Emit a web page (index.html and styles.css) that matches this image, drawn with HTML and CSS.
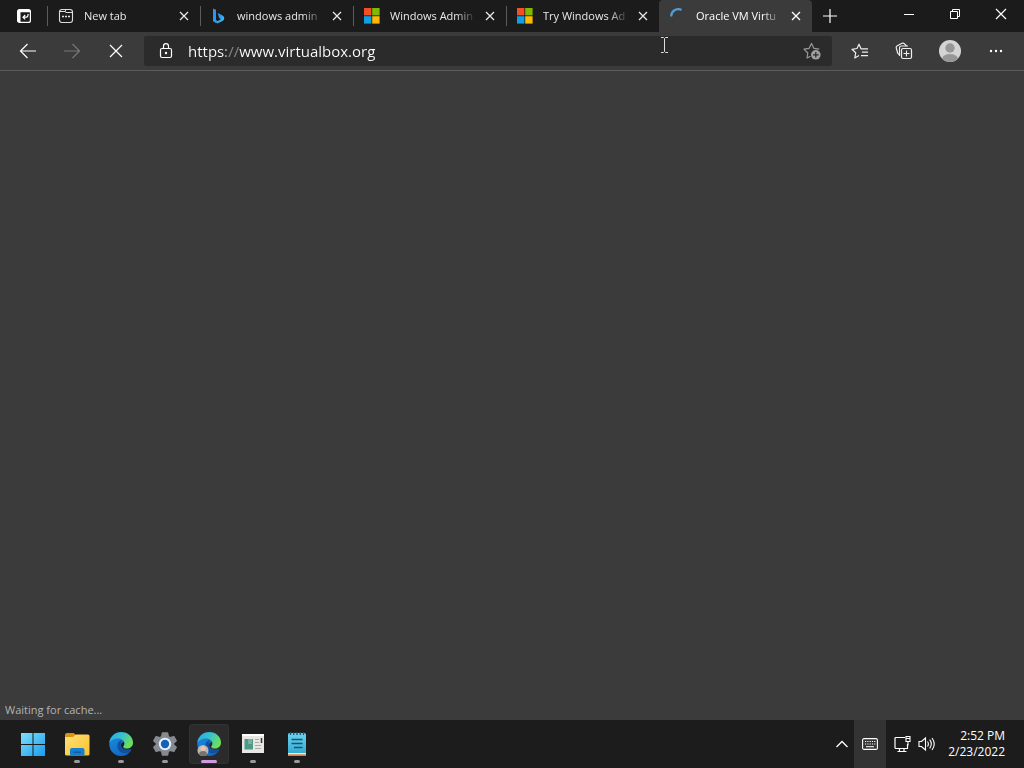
FILE: index.html
```html
<!DOCTYPE html>
<html lang="en">
<head>
<meta charset="utf-8">
<meta name="viewport" content="width=device-width, initial-scale=1">
<title>Oracle VM VirtualBox</title>
<link rel="stylesheet" href="styles.css">
</head>
<body>
<svg class="defs" aria-hidden="true">
  <defs>
    <linearGradient id="edge-top" x1="0" y1="0" x2="1" y2="0.5"><stop offset="0" stop-color="#2aa6ea"/><stop offset=".5" stop-color="#35c1d0"/><stop offset="1" stop-color="#6be05a"/></linearGradient>
    <linearGradient id="edge-body" x1="0" y1="0" x2="0.6" y2="1"><stop offset="0" stop-color="#1b8fdf"/><stop offset="1" stop-color="#1168c4"/></linearGradient>
    <linearGradient id="win" x1="0" y1="0" x2="1" y2="1"><stop offset="0" stop-color="#7fe0fb"/><stop offset="1" stop-color="#189cee"/></linearGradient>
    <linearGradient id="bing-g" x1="0" y1="0" x2="1" y2="1"><stop offset="0" stop-color="#2f8df0"/><stop offset=".6" stop-color="#2b9df0"/><stop offset="1" stop-color="#4fc9f0"/></linearGradient>
    <linearGradient id="folder-g" x1="0" y1="0" x2="1" y2="1"><stop offset="0" stop-color="#ffe07a"/><stop offset="1" stop-color="#f9c22b"/></linearGradient>
    <linearGradient id="note-g" x1="0" y1="0" x2="0" y2="1"><stop offset="0" stop-color="#6bd3ee"/><stop offset="1" stop-color="#2fa4cf"/></linearGradient>
  </defs>
  <symbol id="close" viewBox="0 0 10 10"><path d="M1 1l8 8M9 1l-8 8" fill="none" stroke="currentColor" stroke-width="1.3"/></symbol>
  <symbol id="ms" viewBox="0 0 16 16"><path fill="#f25022" d="M0 0h7.400v7.400H0z"/><path fill="#7fba00" d="M8.200 0h7.400v7.400H8.200z"/><path fill="#109fe2" d="M0 8.200h7.400v7.400H0z"/><path fill="#ffb900" d="M8.200 8.200h7.400v7.400H8.200z"/></symbol>
  <symbol id="edge" viewBox="0 0 24 24">
    <path fill="url(#edge-body)" d="M.3 11C.8 5 5.500 1 12 1l3 9c-2 .2-3 1.500-3 3 0 4 4 5.500 9 4.500.8-.2 1.300.5.8 1.200A12 12 0 0 1 12 24C5 24 0 18.500.3 11z"/>
    <path fill="#114fa0" d="M8.500 14c0-4 2.500-6 5-5.500-1.500 1-2 2.500-1.700 4.500.6 4 5 5.500 9.700 4.400.8-.2 1.200.5.700 1.100C19 23 8.500 22.500 8.500 14z"/>
    <path fill="url(#edge-top)" d="M.3 11C1 4.500 6 0 12 0c7 0 12 5 12 10.500 0 4-3 6-6.200 6-2.600 0-3.600-1-3.600-1.800 0-.8 1.200-1.300 1.200-3.200C15.400 8.500 12.500 6.500 9 6.500 5 6.500 1.500 8.500.3 11z"/>
  </symbol>
</svg>

<header class="browser">
  <div class="tabstrip">
    <button class="tab-actions" aria-label="Tab actions menu">
      <svg width="16" height="16" viewBox="0 0 16 16"><rect x="1.600" y="1.600" width="12.800" height="12.800" rx="2" fill="none" stroke="#fff" stroke-width="1.200"/><path d="M1.500 3.500a2 2 0 0 1 2-2h9a2 2 0 0 1 2 2v.8H4.500v10.200h-1a2 2 0 0 1-2-2z" fill="#fff"/><path d="M12 6v1a2 2 0 0 1-2 2.200H7.200M9.200 7L7 9.200l2.200 2.200" fill="none" stroke="#fff" stroke-width="1.200"/></svg>
    </button>
    <nav class="tabs" aria-label="Tabs">
      <div class="tab">
        <svg class="favicon" viewBox="0 0 16 16"><rect x="1.500" y="1.500" width="13" height="13" rx="2.500" fill="none" stroke="#ddd" stroke-width="1.100"/><path d="M1.500 3.500h6V2M7.500 4.500h7" fill="none" stroke="#ddd"/><path d="M4 8.500h2M7 8.500h2M10 8.500h2" stroke="#ddd" stroke-width="1.500"/></svg>
        <a class="title" href="#">New tab</a>
        <button class="tab-close" aria-label="Close New tab"><svg width="10" height="10"><use href="#close"/></svg></button>
      </div>
      <div class="tab">
        <svg class="favicon" viewBox="0 0 16 16"><path fill="url(#bing-g)" d="M2 .5l3 1.200v10.300l2.500 1.500L5 15 2 13.200zM6.700 5l4.500 2.200c1.500.8 2 1.800 2 3 0 1-.5 2-1.400 2.600L6.500 15.500 5 14.300l5-3.200-1.800-1z"/></svg>
        <a class="title" href="#">windows admin</a>
        <button class="tab-close" aria-label="Close windows admin"><svg width="10" height="10"><use href="#close"/></svg></button>
      </div>
      <div class="tab">
        <svg class="favicon"><use href="#ms"/></svg>
        <a class="title" href="#">Windows Admin</a>
        <button class="tab-close" aria-label="Close Windows Admin"><svg width="10" height="10"><use href="#close"/></svg></button>
      </div>
      <div class="tab">
        <svg class="favicon"><use href="#ms"/></svg>
        <a class="title" href="#">Try Windows Ad</a>
        <button class="tab-close" aria-label="Close Try Windows Ad"><svg width="10" height="10"><use href="#close"/></svg></button>
      </div>
      <div class="tab active">
        <svg class="favicon" viewBox="0 0 16 16"><path d="M1.200 8.500A7 7 0 0 1 11.500 2" fill="none" stroke="#4f9dd6" stroke-width="2.200"/></svg>
        <a class="title" href="#" aria-current="page">Oracle VM Virtu</a>
        <button class="tab-close" aria-label="Close Oracle VM VirtualBox"><svg width="10" height="10"><use href="#close"/></svg></button>
      </div>
      <button class="new-tab" aria-label="New tab"><svg width="14" height="14" viewBox="0 0 14 14"><path d="M7 0v14M0 7h14" stroke="#fff" stroke-width="1.200"/></svg></button>
    </nav>
    <div class="window-controls">
      <button aria-label="Minimize"><svg width="10" height="10"><path d="M0 5.500h10" stroke="#fff"/></svg></button>
      <button aria-label="Restore"><svg width="10" height="10"><path d="M.5 2.500h7v7h-7zM2.500 2.500v-2h7v7h-2" fill="none" stroke="#fff"/></svg></button>
      <button aria-label="Close window"><svg width="12" height="12" viewBox="0 0 12 12"><path d="M1 1l10 10M11 1L1 11" stroke="#fff" stroke-width="1.200"/></svg></button>
    </div>
  </div>

  <div class="toolbar">
    <button class="tool" aria-label="Back"><svg width="18" height="16" viewBox="0 0 18 16"><path d="M17 8H1.500M8.500 1l-7 7 7 7" fill="none" stroke="#fff" stroke-width="1.200"/></svg></button>
    <button class="tool" aria-label="Forward" disabled><svg width="18" height="16" viewBox="0 0 18 16"><path d="M1 8h15.500M9.500 1l7 7-7 7" fill="none" stroke="#787878" stroke-width="1.200"/></svg></button>
    <button class="tool" aria-label="Stop loading"><svg width="14" height="14" viewBox="0 0 14 14"><path d="M1 1l12 12M13 1L1 13" stroke="#fff" stroke-width="1.200"/></svg></button>
    <div class="address">
      <button class="field-button" aria-label="View site information"><svg width="14" height="16" viewBox="0 0 14 16"><rect x="1.500" y="5.500" width="11" height="9" rx="1.500" fill="none" stroke="#fff" stroke-width="1.200"/><path d="M4.500 5.500V3.200a2.500 2.500 0 0 1 5 0v2.300" fill="none" stroke="#fff" stroke-width="1.200"/><circle cx="7" cy="10" r="1.200" fill="#fff"/></svg></button>
      <input class="url" type="text" aria-label="Address and search bar" value="https://www.virtualbox.org" spellcheck="false">
      <button class="field-button" aria-label="Add this page to favorites"><svg width="18" height="18" viewBox="0 0 18 18"><path d="M7.500 14.200L4 16l.8-5L1 7.200l5-.8L8.500 1.500 11 6.400l5.200.8" fill="none" stroke="#9a9a9a" stroke-width="1.200" stroke-linejoin="round"/><circle cx="12.800" cy="12.800" r="4.800" fill="#a0a0a0"/><path d="M12.800 10v5.600M10 12.800h5.600" stroke="#2b2b2b" stroke-width="1.200"/></svg></button>
      <svg class="pointer" width="7" height="16" viewBox="0 0 7 16" aria-hidden="true"><path d="M0 .5h2.500l1 1 1-1H7M0 15.500h2.500l1-1 1 1H7M3.500 1.500v13" fill="none" stroke="#ddd"/></svg>
    </div>
    <div class="tool-group">
      <button class="tool" aria-label="Favorites"><svg width="18" height="18" viewBox="0 0 18 18"><path d="M11.500 6.800H10L8 2.200 6 6.500l-5 .8 3.700 3.500L3.800 16 8 13.500M10 6.800h7M11 10.200h6M10 13.600h7" fill="none" stroke="#eee" stroke-width="1.200" stroke-linejoin="round"/></svg></button>
      <button class="tool" aria-label="Collections"><svg width="18" height="18" viewBox="0 0 18 18"><path d="M5 13L3.500 12a2.500 2.500 0 0 1-1-1.500L1.300 6a2 2 0 0 1 1-2.300L7 1.300a2 2 0 0 1 2.300.3L11.500 4" fill="none" stroke="#eee" stroke-width="1.200"/><rect x="6.500" y="6.500" width="10" height="10" rx="1.500" fill="none" stroke="#eee" stroke-width="1.200"/><path d="M11.500 8.500v6M8.500 11.500h6M4.500 14V6a2 2 0 0 1 2-2H13" fill="none" stroke="#eee" stroke-width="1.100"/></svg></button>
      <button class="tool profile" aria-label="Profile"><svg width="22" height="22" viewBox="0 0 22 22"><clipPath id="disc"><circle cx="11" cy="11" r="11"/></clipPath><g clip-path="url(#disc)"><path fill="#d4d4d4" d="M0 0h22v22H0z"/><circle cx="11" cy="8" r="4.700" fill="#979797"/><ellipse cx="11" cy="19" rx="8" ry="5" fill="#979797"/></g></svg></button>
      <button class="tool" aria-label="Settings and more"><svg width="14" height="4"><circle cx="2" cy="2" r="1.200" fill="#fff"/><circle cx="7" cy="2" r="1.200" fill="#fff"/><circle cx="12" cy="2" r="1.200" fill="#fff"/></svg></button>
    </div>
  </div>
</header>

<main class="page">
  <p class="status" role="status">Waiting for cache...</p>
</main>

<footer class="taskbar">
  <nav class="apps" aria-label="Taskbar">
    <button class="app" aria-label="Start"><svg width="24" height="24" viewBox="0 0 24 24"><path fill="url(#win)" d="M0 1h11.500v11H0zM12.500 1H24v11H12.500zM0 13h11.500v11H0zM12.500 13H24v11H12.500z"/></svg></button>
    <button class="app running" aria-label="File Explorer"><svg width="26" height="24" viewBox="0 0 26 24"><path fill="#d8930f" d="M1 3a2 2 0 0 1 2-2h7l2 3v4H1z"/><path fill="url(#folder-g)" d="M1 5h8l2.500-2.500H24a1.500 1.500 0 0 1 1.500 1.500v18a1.500 1.500 0 0 1-1.500 1.500H2.500A1.500 1.500 0 0 1 1 22z"/><path fill="#1680d0" d="M6 23.500V18a2 2 0 0 1 2-2h10.500a2 2 0 0 1 2 2v5.500z"/><path fill="#125d9c" d="M9.500 19.500H17V21H9.500z"/></svg></button>
    <button class="app running" aria-label="Microsoft Edge"><svg width="24" height="24"><use href="#edge"/></svg></button>
    <button class="app running" aria-label="Settings"><svg width="24" height="24" viewBox="0 0 24 24"><path fill="#858b90" stroke="#858b90" stroke-width="1.500" stroke-linejoin="round" d="M9.500 1h5l.8 3.600 2 1.200 3.500-1.200 2.400 4.200-2.700 2.500v1.400l2.700 2.500-2.400 4.200-3.500-1.200-2 1.200-.8 3.600h-5l-.8-3.600-2-1.200-3.500 1.200L.8 15.200l2.700-2.500v-1.400L.8 8.800l2.400-4.200 3.500 1.200 2-1.200z"/><circle cx="12" cy="12" r="6.200" fill="#e8f1fa"/><circle cx="12" cy="12" r="4.200" fill="#1262b8"/></svg></button>
    <button class="app running current" aria-label="Microsoft Edge, profile window"><svg width="26" height="24" viewBox="0 0 26 24"><use href="#edge" x="1" width="24" height="24"/><circle cx="7" cy="18.500" r="5.500" fill="#b9b6b3"/><circle cx="7" cy="16.500" r="2.500" fill="#e1c5ae"/><path fill="#78736f" d="M3 22.300c0-4.300 8-4.300 8 0a5.500 5.500 0 0 1-8 0z"/></svg></button>
    <button class="app running" aria-label="Server Manager"><svg width="24" height="24" viewBox="0 0 24 24"><path fill="#e8e6e3" d="M1 2h22v19H1z"/><path fill="#fff" d="M1 2h22v2H1z"/><path fill="#4d9a86" d="M3.500 7H12v10.500H3.500z"/><path fill="#76b3a2" d="M7 7h4v5H7z"/><path d="M14 7.500h4M14 10.500h4M14 13.500h6M14 16.500h6" stroke="#aaa"/><path d="M20.500 6v5" stroke="#333" stroke-width="1.500"/></svg></button>
    <button class="app running" aria-label="Notepad"><svg width="20" height="26" viewBox="0 0 20 26"><rect x="1" y="2" width="18" height="23" rx="1.500" fill="url(#note-g)"/><path fill="#d9823b" d="M1 23h18v2H1z"/><path fill="#f3e8dc" d="M1 22h18v1.300H1z"/><path d="M4.500 8.500h11M4.500 12.500h11M7 16.500h8.500" stroke="#125474" stroke-width="1.500"/><path d="M3.500 1v3M6.700 1v3M10 1v3M13.300 1v3M16.500 1v3" stroke="#175570" stroke-width="1.300"/></svg></button>
  </nav>
  <div class="tray">
    <button class="chevron" aria-label="Show hidden icons"><svg width="14" height="8" viewBox="0 0 14 8"><path d="M1.500 7L7 1.500 12.500 7" fill="none" stroke="#fff" stroke-width="1.300"/></svg></button>
    <button class="keyboard" aria-label="Touch keyboard"><svg width="16" height="12" viewBox="0 0 16 12"><rect x=".6" y=".6" width="14.800" height="10.800" rx="1.500" fill="none" stroke="#fff" stroke-width="1.100"/><path d="M3 3.500h10.500M3 6h10.500" stroke="#fff" stroke-dasharray="1.200 1.100"/><path d="M4 8.700h8" stroke="#fff"/></svg></button>
    <button class="system" aria-label="Network and volume">
      <svg width="17" height="18" viewBox="0 0 17 18"><path d="M11 2.500H2a1 1 0 0 0-1 1v9a1 1 0 0 0 1 1h11.500V9M5.500 13.500v3M10 13.500v3M3.500 16.500h9" fill="none" stroke="#fff" stroke-width="1.200"/><path d="M12 1.500h4v5h-4zM12 3.500h4M14 6.500v4" fill="none" stroke="#fff" stroke-width="1.100"/></svg>
      <svg width="18" height="16" viewBox="0 0 18 16"><path d="M1 5.500h2.500L7.500 2v12l-4-3.500H1zM9.500 5.500q1.800 2.500 0 5M11.700 3.700q3.200 4.300 0 8.600M14 2q4.500 6 0 12" fill="none" stroke="#fff" stroke-width="1.100"/></svg>
    </button>
    <button class="clock"><time datetime="2022-02-23T14:52">2:52 PM<br>2/23/2022</time></button>
  </div>
</footer>
</body>
</html>
```
FILE: styles.css
```css
* { box-sizing: border-box; }

body {
  margin: 0;
  min-height: 100vh;
  display: flex;
  flex-direction: column;
  background: #3b3b3b;
  color: #fff;
  font: 12px/16px "Open Sans", "Noto Sans", sans-serif;
}

button {
  display: flex;
  align-items: center;
  justify-content: center;
  margin: 0;
  padding: 0;
  border: 0;
  background: none;
  color: inherit;
  font: inherit;
}

svg { display: block; flex: none; }
.defs { position: absolute; width: 0; height: 0; }

.tabstrip {
  display: flex;
  height: 32px;
  background: #1b1b1b;
}

.tab-actions { width: 47px; flex: none; }
.tabs { display: flex; flex: 1; min-width: 0; }

.tab {
  display: flex;
  align-items: center;
  flex: 0 1 153px;
  min-width: 0;
  padding: 0 6px 0 10px;
  border-left: 1px solid transparent;
  background: linear-gradient(#5c5c5c, #5c5c5c) left center / 1px 20px no-repeat;
  background-origin: border-box;
  color: #e8e8e8;
}

.tab.active {
  background: #3b3b3b;
  border-radius: 4px 4px 0 0;
  color: #fff;
}

.favicon { width: 16px; height: 16px; }

.title {
  flex: 1;
  min-width: 0;
  margin: 0 4px 0 10px;
  overflow: hidden;
  white-space: nowrap;
  font-size: 11px;
  color: inherit;
  text-decoration: none;
  -webkit-mask-image: linear-gradient(to right, #000 calc(100% - 20px), transparent);
  mask-image: linear-gradient(to right, #000 calc(100% - 20px), transparent);
}

.tab-close { width: 20px; height: 20px; flex: none; }
.new-tab { width: 36px; flex: none; }
.window-controls { display: flex; flex: none; padding-bottom: 4px; }
.window-controls button { width: 46px; }

.toolbar {
  display: flex;
  align-items: center;
  height: 39px;
  padding: 0 6px;
  background: #3b3b3b;
  border-bottom: 1px solid #5b5b5b;
}

.tool { width: 44px; height: 32px; flex: none; }
.tool.profile { width: 48px; }
.tool-group { display: flex; }

.address {
  position: relative;
  display: flex;
  align-items: center;
  flex: 1;
  min-width: 0;
  height: 30px;
  margin: 0 6px;
  background: #2b2b2b;
  border-radius: 2px;
}

.field-button { width: 44px; height: 30px; flex: none; }
.address .field-button:last-of-type { width: 40px; }

.url {
  flex: 1;
  min-width: 0;
  height: 30px;
  padding: 0;
  border: 0;
  outline: 0;
  font: 15px/20px "Open Sans", "Noto Sans", sans-serif;
  color: transparent;
  background: linear-gradient(to right, #fff 38px, #8c8c8c 38px 51px, #fff 51px);
  -webkit-background-clip: text;
  background-clip: text;
}

.pointer { position: absolute; left: calc(75% + 1px); top: 1px; }

.page {
  flex: 1;
  display: flex;
  align-items: flex-end;
}

.status { margin: 0; padding: 0 5px 2px; font-size: 11px; color: #b4b4b4; }

.taskbar {
  display: flex;
  justify-content: space-between;
  height: 48px;
  background: #1c1c1c;
}

.apps { display: flex; align-items: center; gap: 4px; padding-left: 13px; }

.app {
  position: relative;
  width: 40px;
  height: 40px;
  border-radius: 4px;
}

.app.current { background: #2b2b2b; box-shadow: inset 0 0 0 1px #323232; }

.running::after {
  content: "";
  position: absolute;
  left: calc(50% - 3px);
  bottom: 1px;
  width: 6px;
  height: 3px;
  border-radius: 2px;
  background: #9a9a9a;
}

.current::after { left: calc(50% - 8px); width: 16px; background: #d29ade; }

.tray { display: flex; }
.chevron { width: 24px; }
.keyboard { width: 32px; background: #333; }
.system { gap: 7px; padding: 0 8px; }
.clock { padding: 0 19px 0 4px; text-align: right; }
```
